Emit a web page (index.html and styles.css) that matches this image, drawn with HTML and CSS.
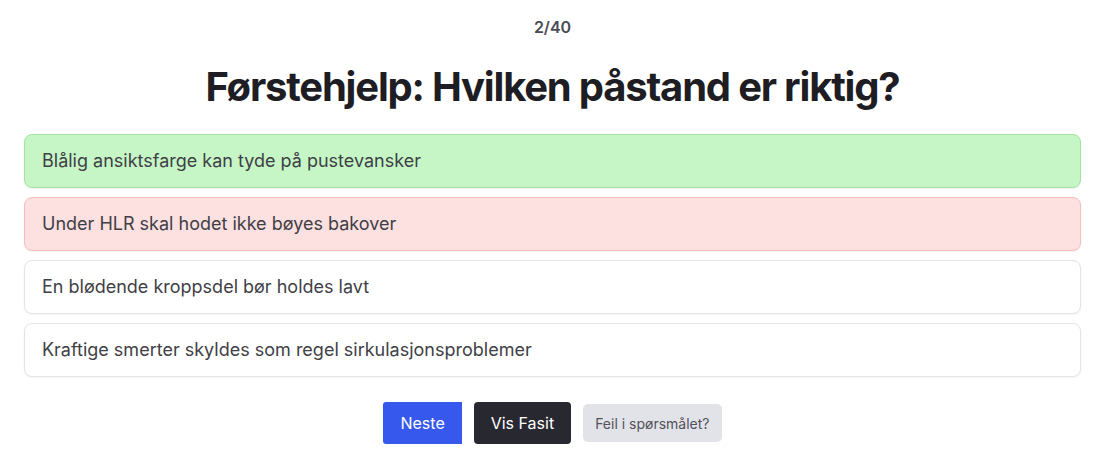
FILE: index.html
```html
<!DOCTYPE html>
<html lang="no">
<head>
    <meta charset="UTF-8">
    <meta name="viewport" content="width=device-width, initial-scale=1.0">
    <title>Førstehjelp quiz</title>
    <link rel="stylesheet" href="styles.css">
</head>
<body>
    <div class="quiz">
        <div class="counter">2/40</div>
        <h1 class="question">Førstehjelp: Hvilken påstand er riktig?</h1>

        <!-- svaralternativer -->
        <div class="options">
            <div class="option correct">Blålig ansiktsfarge kan tyde på pustevansker</div>
            <div class="option wrong">Under HLR skal hodet ikke bøyes bakover</div>
            <div class="option">En blødende kroppsdel bør holdes lavt</div>
            <div class="option">Kraftige smerter skyldes som regel sirkulasjonsproblemer</div>
        </div>

        <!-- knapper -->
        <div class="actions">
            <button class="btn btn-next">Neste</button>
            <button class="btn btn-answer">Vis Fasit</button>
            <button class="btn btn-report">Feil i spørsmålet?</button>
        </div>
    </div>
</body>
</html>
```

FILE: styles.css
```css
body {
    margin: 0;
    padding: 0;
    background-color: #fff;
    font-family: 'Inter', 'Liberation Sans', sans-serif;
    color: #3f3f46;
}

.quiz {
    padding: 15px 20px 0 24px;
    text-align: center;
}

/* teller */
.counter {
    font-size: 16px;
    line-height: 24px;
    font-weight: 600;
    color: #4b4b55;
}

/* spørsmål */
.question {
    margin: 28px 0 0;
    font-size: 40px;
    line-height: 40px;
    font-weight: 700;
    letter-spacing: -0.03em;
    color: #1d1d23;
}

/* alternativer */
.options {
    margin-top: 27px;
    display: flex;
    flex-direction: column;
    gap: 9px;
    text-align: left;
}

.option {
    padding: 12px 17px;
    border: 1px solid #e4e4e7;
    border-radius: 8px;
    background-color: #fff;
    font-size: 18px;
    line-height: 28px;
    color: #3f3f46;
    box-shadow: 0 1px 2px rgba(0, 0, 0, 0.05);
}

.option.correct {
    background-color: #c6f6c6;
    border-color: #a3e3a3;
}

.option.wrong {
    background-color: #fde0e0;
    border-color: #f9bcbc;
}

/* knapper */
.actions {
    margin-top: 25px;
    display: flex;
    justify-content: center;
    align-items: center;
    gap: 12px;
}

.btn {
    font-family: inherit;
    border: none;
    cursor: pointer;
}

.btn-next {
    height: 42px;
    padding: 0 17px;
    font-size: 16px;
    background-color: #3658ec;
    color: #fff;
    border-radius: 3px 0 0 3px;
}

.btn-answer {
    height: 42px;
    padding: 0 17px;
    font-size: 16px;
    background-color: #282830;
    color: #fff;
    border-radius: 4px;
}

.btn-report {
    height: 38px;
    padding: 0 12px;
    font-size: 14px;
    background-color: #e2e3e8;
    color: #52525b;
    border-radius: 5px;
}
```
